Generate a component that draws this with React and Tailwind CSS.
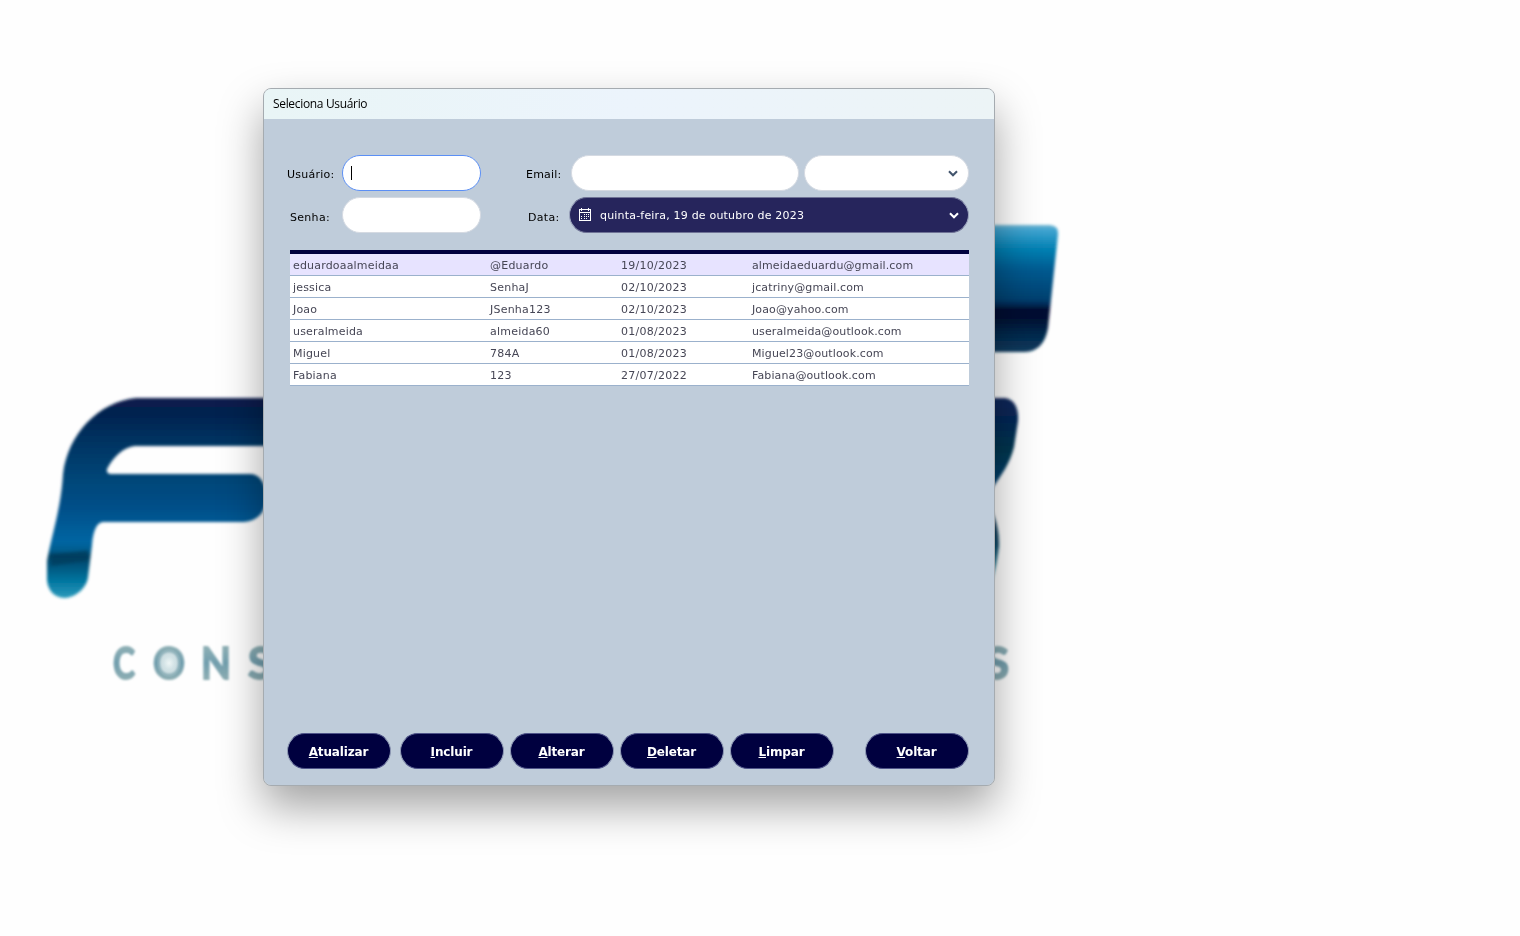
import React from "react";

const rows = [
  ["eduardoaalmeidaa", "@Eduardo", "19/10/2023", "almeidaeduardu@gmail.com"],
  ["jessica", "SenhaJ", "02/10/2023", "jcatriny@gmail.com"],
  ["Joao", "JSenha123", "02/10/2023", "Joao@yahoo.com"],
  ["useralmeida", "almeida60", "01/08/2023", "useralmeida@outlook.com"],
  ["Miguel", "784A", "01/08/2023", "Miguel23@outlook.com"],
  ["Fabiana", "123", "27/07/2022", "Fabiana@outlook.com"],
];

const columnTracking = [
  "tracking-[0.18px]",
  "tracking-[0.22px]",
  "tracking-[0.27px]",
  "tracking-[0.12px]",
];

const actions = ["Atualizar", "Incluir", "Alterar", "Deletar", "Limpar"];

function Logo() {
  return (
    <svg className="absolute top-0 left-0" width="1520" height="936" viewBox="0 0 1520 936" aria-hidden="true">
      <defs>
        <linearGradient id="letterF" gradientUnits="userSpaceOnUse" x1="0" y1="398" x2="0" y2="598">
          <stop offset="0" stopColor="#0a1c4c" />
          <stop offset="0.08" stopColor="#03224f" />
          <stop offset="0.2" stopColor="#03315f" />
          <stop offset="0.4" stopColor="#044577" />
          <stop offset="0.56" stopColor="#04508a" />
          <stop offset="0.72" stopColor="#0565a2" />
          <stop offset="0.765" stopColor="#055b8c" />
          <stop offset="0.79" stopColor="#054061" />
          <stop offset="0.83" stopColor="#055078" />
          <stop offset="0.92" stopColor="#0578a2" />
          <stop offset="1" stopColor="#2a9abb" />
        </linearGradient>
        <linearGradient id="block" gradientUnits="userSpaceOnUse" x1="0" y1="225" x2="0" y2="353">
          <stop offset="0" stopColor="#6fb4d0" />
          <stop offset="0.04" stopColor="#3fa3d0" />
          <stop offset="0.18" stopColor="#0582b4" />
          <stop offset="0.35" stopColor="#045a90" />
          <stop offset="0.58" stopColor="#04406f" />
          <stop offset="0.62" stopColor="#042b58" />
          <stop offset="0.66" stopColor="#020d30" />
          <stop offset="0.74" stopColor="#021234" />
          <stop offset="0.85" stopColor="#03284c" />
          <stop offset="1" stopColor="#0c3c5f" />
        </linearGradient>
        <linearGradient id="bowl" gradientUnits="userSpaceOnUse" x1="0" y1="397" x2="0" y2="488">
          <stop offset="0" stopColor="#14275a" />
          <stop offset="0.25" stopColor="#032754" />
          <stop offset="0.6" stopColor="#03364f" />
          <stop offset="1" stopColor="#053f73" />
        </linearGradient>
        <linearGradient id="bowlLow" gradientUnits="userSpaceOnUse" x1="0" y1="510" x2="0" y2="580">
          <stop offset="0" stopColor="#0a2a48" />
          <stop offset="0.5" stopColor="#0b4967" />
          <stop offset="1" stopColor="#3d99b1" />
        </linearGradient>
        <linearGradient id="caption" gradientUnits="userSpaceOnUse" x1="0" y1="646" x2="0" y2="680">
          <stop offset="0" stopColor="#8fb0b5" />
          <stop offset="0.5" stopColor="#729fae" />
          <stop offset="1" stopColor="#8eaeb3" />
        </linearGradient>
        <radialGradient id="captionO">
          <stop offset="0" stopColor="#edf5f5" />
          <stop offset="0.45" stopColor="#d3e3e6" />
          <stop offset="1" stopColor="#9dbcc4" stopOpacity="0.2" />
        </radialGradient>
        <filter id="soft" x="-5%" y="-5%" width="110%" height="110%">
          <feGaussianBlur stdDeviation="1.6" />
        </filter>
        <filter id="softText" x="-10%" y="-10%" width="120%" height="120%">
          <feGaussianBlur stdDeviation="0.9" />
        </filter>
      </defs>
      <g filter="url(#soft)">
        <path
          fill="url(#letterF)"
          d="M290 398 H136 C98 402 68 434 63 474 C61 508 53 530 47 561 V580 C48 593 57 598 65 598 C77 597 87 587 88 577 L92 545 C93 531 97 522 103 522 H244 C258 521 266 512 266 497 C266 482 259 474 250 474 H110 Q106 473 107 469 C114 456 124 447 135 446 H290 Z"
        />
        <path fill="#043c5c" opacity="0.65" d="M52 554 L88 550 L87 561 L51 566 Z" />
        <path fill="url(#block)" d="M960 225 H1050 Q1059 226 1058 234 L1048 328 Q1044 351 1025 352 H960 Z" />
        <path fill="url(#bowl)" d="M960 398 H1005 C1014 399 1019 408 1018 421 L1014 447 C1010 464 1001 475 992 489 L960 510 Z" />
        <path fill="url(#bowlLow)" d="M980 490 C995 512 999 528 999 546 C997 561 995 572 991 584 L975 600 Z" />
      </g>
      <g
        fill="url(#caption)"
        stroke="url(#caption)"
        strokeWidth="1.8"
        fontSize="43"
        fontWeight="700"
        filter="url(#softText)"
        className="font-['Lato',sans-serif]"
      >
        <text x="113" y="678.5" textLength="22" lengthAdjust="spacingAndGlyphs">C</text>
        <text x="153" y="678.5" textLength="32" lengthAdjust="spacingAndGlyphs">O</text>
        <text x="201" y="678.5" textLength="30" lengthAdjust="spacingAndGlyphs">N</text>
        <text x="248" y="678.5" textLength="24" lengthAdjust="spacingAndGlyphs">S</text>
        <text x="985" y="678.5" textLength="24" lengthAdjust="spacingAndGlyphs">S</text>
      </g>
      <ellipse cx="169" cy="663" rx="12" ry="14" fill="url(#captionO)" />
    </svg>
  );
}

function Chevron({ className }) {
  return (
    <svg className={className} width="10" height="7" viewBox="0 0 10 7" fill="none" stroke="currentColor" strokeWidth="2.1">
      <path d="M1 1.2 L5 5.2 L9 1.2" />
    </svg>
  );
}

function CalendarIcon() {
  return (
    <svg className="mb-px" width="12" height="13" viewBox="0 0 12 13" fill="#fff" shapeRendering="crispEdges">
      <path d="M0 1H12V13H0Z M1 2V4H11V2Z M1 5V12H11V5Z" fillRule="evenodd" />
      <path d="M2 0H3V3H2Z M9 0H10V3H9Z" />
      <path d="M5 6H6V7H5Z M7 6H8V7H7Z M9 6H10V7H9Z M2 8H3V9H2Z M5 8H6V9H5Z M7 8H8V9H7Z M9 8H10V9H9Z M2 10H3V11H2Z M5 10H6V11H5Z M7 10H8V11H7Z" />
    </svg>
  );
}

function ActionButton({ label, className = "" }) {
  return (
    <button
      className={`h-9 w-[104px] rounded-full border border-x-[#8f9ab5] border-y-[#50558a] bg-[#00003f] pt-0.5 pr-px text-center text-[12px] font-bold tracking-[-0.15px] text-white ${className}`}
    >
      <span className="underline underline-offset-1">{label[0]}</span>
      {label.slice(1)}
    </button>
  );
}

export default function App() {
  return (
    <main className="relative h-[936px] w-[1520px] overflow-hidden bg-[#fefefe] pt-[88px] pl-[263px] font-['DejaVu_Sans',sans-serif] text-[11px] text-black">
      <Logo />
      <section className="relative flex h-[698px] w-[732px] flex-col overflow-hidden rounded-lg border border-[#a5abb0] bg-[#bfccda] bg-clip-padding shadow-[0_21px_44px_rgba(0,0,0,0.36)]">
        <header className="flex h-[30px] shrink-0 items-center bg-linear-to-r from-[#e9f5f6] via-[#ecf4fc] to-[#ecf4f6] pl-[9px] font-['Open_Sans',sans-serif] text-[12px] tracking-[-0.33px]">
          Seleciona Usuário
        </header>

        <div className="flex flex-1 flex-col pt-9 pr-[25px] pb-4 pl-[23px]">
          <div className="flex h-9 items-center">
            <label className="w-[55px] pt-[5px] tracking-[0.25px]">Usuário:</label>
            <div className="flex h-9 w-[139px] items-center rounded-full border border-[#5b8ff5] bg-white pl-2">
              <span className="h-3.5 w-px bg-black" />
            </div>
            <label className="ml-[45px] w-[45px] pt-[5px] tracking-[0.2px]">Email:</label>
            <div className="h-9 w-[228px] rounded-full border border-[#d5dae2] bg-white" />
            <div className="ml-[5px] flex h-9 w-[165px] items-center justify-end rounded-full border border-[#d5dae2] bg-white pr-2.5 text-[#44566e]">
              <Chevron className="mt-px" />
            </div>
          </div>

          <div className="mt-1.5 flex h-9 items-center">
            <label className="w-[55px] pt-[7px] pl-[3px] tracking-[0.3px]">Senha:</label>
            <div className="h-9 w-[139px] rounded-full border border-[#d5dae2] bg-white" />
            <label className="ml-[47px] w-[41px] pt-[7px] tracking-[0.3px]">Data:</label>
            <div className="flex h-9 w-[400px] items-center rounded-full border border-x-[#9ca5bd] border-y-[#6f7396] bg-[#26255c] pr-[9px] pl-[9px] text-white">
              <CalendarIcon />
              <span className="mt-0.5 ml-[9px] flex-1 whitespace-nowrap tracking-[0.19px]">
                quinta-feira, 19 de outubro de 2023
              </span>
              <Chevron className="mt-px" />
            </div>
          </div>

          <div className="mt-[17px] ml-[3px] w-[679px] border-t-4 border-[#00003f] text-[#464655]">
            {rows.map((row, i) => (
              <div
                key={row[0]}
                className={`grid h-[22px] grid-cols-[197px_131px_131px_1fr] items-center border-b border-[#9bb1cc] pt-[3px] pl-[3px] ${
                  i === 0 ? "bg-[#e7e3ff]" : "bg-white"
                }`}
              >
                {row.map((cell, c) => (
                  <span key={cell} className={columnTracking[c]}>
                    {cell}
                  </span>
                ))}
              </div>
            ))}
          </div>

          <div className="mt-auto flex">
            {actions.map((label, i) => (
              <ActionButton key={label} label={label} className={i === 0 ? "mr-[9px]" : "mr-1.5"} />
            ))}
            <ActionButton label="Voltar" className="ml-auto" />
          </div>
        </div>
      </section>
    </main>
  );
}
